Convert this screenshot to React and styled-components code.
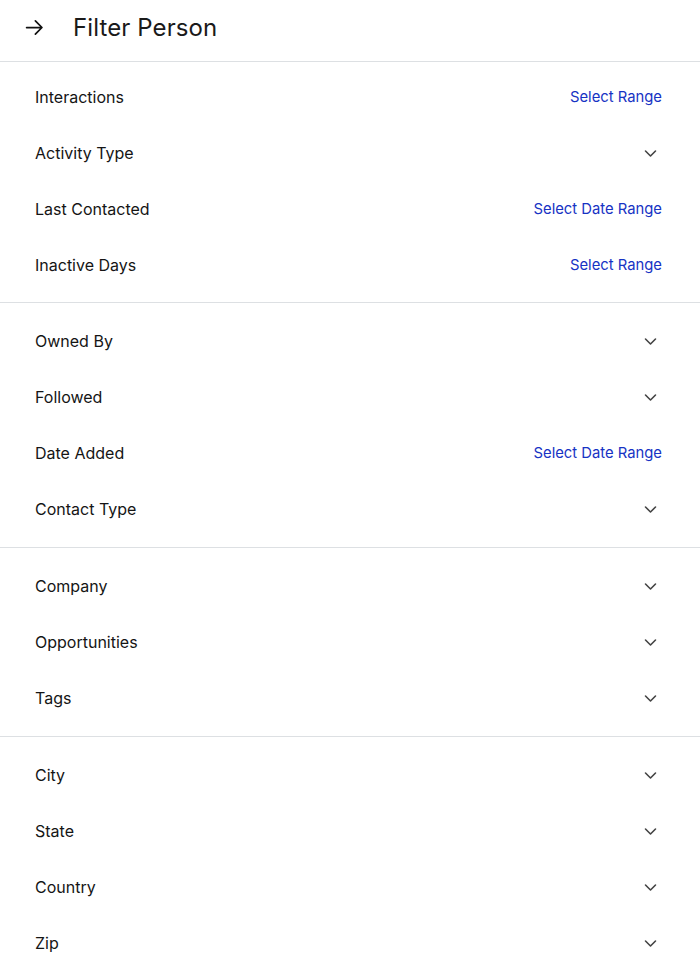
import React from "react";
import styled, { createGlobalStyle } from "styled-components";

const Global = createGlobalStyle`
  html, body { margin: 0; padding: 0; background: #fff; }
  body { font-family: Inter, "Noto Sans", sans-serif; color: #111; -webkit-font-smoothing: antialiased; }
`;

const Page = styled.div`
  width: 700px;
  min-height: 978px;
  background: #fff;
`;

const Header = styled.header`
  height: 61px;
  display: flex;
  align-items: center;
  padding: 0 0 0 24px;
  gap: 28px;
  border-bottom: 1px solid #dde0e3;
  box-sizing: content-box;
`;

const BackButton = styled.button`
  border: 0;
  background: none;
  padding: 0;
  width: 21px;
  height: 21px;
  display: flex;
  align-items: center;
  justify-content: center;
  color: #111;
  margin-top: -6px;
`;

const Title = styled.h1`
  margin: -6px 0 0 0;
  font-size: 24px;
  font-weight: 400;
  color: #1a1a1a;
  letter-spacing: 0.1px;
`;

const Section = styled.section`
  padding: ${(p) => (p.$first ? "7px 0 9px" : "10px 0")};
  border-bottom: ${(p) => (p.$last ? "none" : "1px solid #dde0e3")};
`;

const Row = styled.div`
  height: 56px;
  display: flex;
  align-items: center;
  justify-content: space-between;
  padding: 0 38px 0 35px;
`;

const Label = styled.span`
  font-size: 16px;
  color: #151515;
`;

const Action = styled.a`
  font-size: 14.8px;
  color: #1733c4;
  text-decoration: none;
  cursor: pointer;
`;

const ChevronBox = styled.span`
  width: 24px;
  height: 24px;
  display: flex;
  align-items: center;
  justify-content: center;
  color: #444;
`;

const Chevron = () => (
  <ChevronBox>
    <svg width="24" height="24" viewBox="0 0 24 24" fill="none">
      <path d="M7.5 10l5 5 5-5" stroke="currentColor" strokeWidth="1.6" strokeLinecap="round" strokeLinejoin="round" />
    </svg>
  </ChevronBox>
);

const sections = [
  [
    ["Interactions", "Select Range"],
    ["Activity Type"],
    ["Last Contacted", "Select Date Range"],
    ["Inactive Days", "Select Range"],
  ],
  [
    ["Owned By"],
    ["Followed"],
    ["Date Added", "Select Date Range"],
    ["Contact Type"],
  ],
  [["Company"], ["Opportunities"], ["Tags"]],
  [["City"], ["State"], ["Country"], ["Zip"]],
];

export default function App() {
  return (
    <Page>
      <Global />
      <Header>
        <BackButton aria-label="back">
          <svg width="21" height="21" viewBox="0 0 24 24" fill="none">
            <path d="M3 12h17M13 4.5l7.5 7.5-7.5 7.5" stroke="currentColor" strokeWidth="2" strokeLinecap="round" strokeLinejoin="round" />
          </svg>
        </BackButton>
        <Title>Filter Person</Title>
      </Header>
      {sections.map((rows, i) => (
        <Section key={i} $first={i === 0} $last={i === sections.length - 1}>
          {rows.map(([label, action]) => (
            <Row key={label}>
              <Label>{label}</Label>
              {action ? <Action>{action}</Action> : <Chevron />}
            </Row>
          ))}
        </Section>
      ))}
    </Page>
  );
}
